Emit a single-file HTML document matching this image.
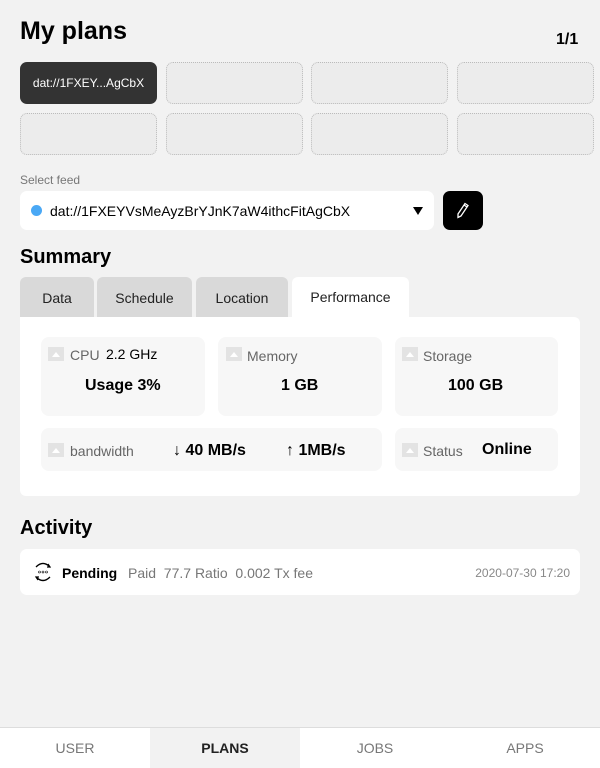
<!DOCTYPE html>
<html><head><style>
*{box-sizing:border-box;margin:0;padding:0}
body{width:600px;height:768px;background:#f2f2f2;font-family:"Liberation Sans",sans-serif;position:relative;overflow:hidden;color:#000}
.abs{position:absolute}
.cell{position:absolute;width:137px;height:42px;border:1px dotted #bbb;border-radius:7px;background:#ececec}
.tab{position:absolute;top:277px;height:40px;background:#d9d9d9;border-radius:6px 6px 0 0;font-size:14px;text-align:center;line-height:42px;color:#222}
.card{position:absolute;background:#f7f7f7;border-radius:8px}
.ic{position:absolute;width:16px;height:14px;background:#e3e3e3}
.ic:after{content:"";position:absolute;left:4px;top:5px;border-left:4px solid transparent;border-right:4px solid transparent;border-bottom:5px solid #fff}
.lbl{position:absolute;font-size:14px;color:#666}
.val{position:absolute;font-size:16px;font-weight:bold}
.nav{position:absolute;top:728px;width:150px;height:40px;text-align:center;line-height:40px;font-size:14px;color:#777}
</style></head><body>
<div class="abs" style="left:20px;top:17px;font-size:25px;font-weight:bold">My plans</div>
<div class="abs" style="left:556px;top:31px;font-size:16px;font-weight:bold">1/1</div>
<div class="cell" style="left:20px;top:62px;background:#333;border:none;color:#fff;font-size:12px;text-align:center;line-height:42px">dat://1FXEY...AgCbX</div>
<div class="cell" style="left:166px;top:62px"></div>
<div class="cell" style="left:311px;top:62px"></div>
<div class="cell" style="left:457px;top:62px"></div>
<div class="cell" style="left:20px;top:113px"></div>
<div class="cell" style="left:166px;top:113px"></div>
<div class="cell" style="left:311px;top:113px"></div>
<div class="cell" style="left:457px;top:113px"></div>
<div class="abs" style="left:20px;top:173px;font-size:12px;color:#777">Select feed</div>
<div class="abs" style="left:20px;top:191px;width:414px;height:39px;background:#fff;border-radius:7px">
 <div class="abs" style="left:11px;top:14px;width:11px;height:11px;border-radius:50%;background:#4aa8f5"></div>
 <div class="abs" style="left:30px;top:12px;font-size:14px">dat://1FXEYVsMeAyzBrYJnK7aW4ithcFitAgCbX</div>
 <div class="abs" style="left:393px;top:16px;border-left:5px solid transparent;border-right:5px solid transparent;border-top:8px solid #000"></div>
</div>
<div class="abs" style="left:443px;top:191px;width:40px;height:39px;background:#000;border-radius:7px">
 <svg class="abs" style="left:13px;top:11px" width="14" height="17" viewBox="0 0 14 17"><path d="M9 1.5l3 2L5 14l-3 1.5 0-3.5z M8 3l3 2" fill="none" stroke="#fff" stroke-width="1.3"/></svg>
</div>
<div class="abs" style="left:20px;top:246px;font-size:20px;font-weight:bold">Summary</div>
<div class="tab" style="left:20px;width:74px">Data</div>
<div class="tab" style="left:97px;width:95px">Schedule</div>
<div class="tab" style="left:196px;width:92px">Location</div>
<div class="tab" style="left:292px;width:117px;background:#fff;line-height:40px">Performance</div>
<div class="abs" style="left:20px;top:317px;width:560px;height:179px;background:#fff;border-radius:0 6px 6px 6px"></div>
<div class="card" style="left:41px;top:337px;width:164px;height:79px"></div>
<div class="card" style="left:218px;top:337px;width:164px;height:79px"></div>
<div class="card" style="left:395px;top:337px;width:163px;height:79px"></div>
<div class="card" style="left:41px;top:428px;width:341px;height:43px"></div>
<div class="card" style="left:395px;top:428px;width:163px;height:43px"></div>
<div class="ic" style="left:48px;top:347px"></div><div class="lbl" style="left:70px;top:347px">CPU</div><div class="abs" style="left:106px;top:346px;font-size:14px">2.2 GHz</div>
<div class="val" style="left:85px;top:377px">Usage 3%</div>
<div class="ic" style="left:226px;top:347px"></div><div class="lbl" style="left:247px;top:348px">Memory</div>
<div class="val" style="left:281px;top:377px">1 GB</div>
<div class="ic" style="left:402px;top:347px"></div><div class="lbl" style="left:423px;top:348px">Storage</div>
<div class="val" style="left:448px;top:377px">100 GB</div>
<div class="ic" style="left:48px;top:443px"></div><div class="lbl" style="left:70px;top:443px">bandwidth</div>
<div class="val" style="left:173px;top:442px">↓ 40 MB/s</div>
<div class="val" style="left:286px;top:442px">↑ 1MB/s</div>
<div class="ic" style="left:402px;top:443px"></div><div class="lbl" style="left:423px;top:443px">Status</div>
<div class="val" style="left:482px;top:441px">Online</div>
<div class="abs" style="left:20px;top:517px;font-size:20px;font-weight:bold">Activity</div>
<div class="abs" style="left:20px;top:549px;width:560px;height:46px;background:#fff;border-radius:7px">
 <svg class="abs" style="left:14px;top:12px" width="18" height="22" viewBox="0 0 18 22"><path d="M2 6Q9 -1 16 6M16 16Q9 23 2 16" fill="none" stroke="#000" stroke-width="1.3"/><path d="M14 3l2 3-3 0M4 19l-2-3 3 0" fill="none" stroke="#000" stroke-width="1.2"/><circle cx="5.5" cy="11" r="1" fill="none" stroke="#000" stroke-width=".6"/><circle cx="9" cy="11" r="1" fill="none" stroke="#000" stroke-width=".6"/><circle cx="12.5" cy="11" r="1" fill="none" stroke="#000" stroke-width=".6"/></svg>
 <div class="abs" style="left:42px;top:16px;font-size:14px;font-weight:bold">Pending</div>
 <div class="abs" style="left:108px;top:16px;font-size:14px;color:#777">Paid&nbsp; 77.7 Ratio&nbsp; 0.002 Tx fee</div>
 <div class="abs" style="right:10px;top:17px;font-size:12px;color:#888">2020-07-30 17:20</div>
</div>
<div class="abs" style="left:0;top:727px;width:600px;height:41px;background:#fff;border-top:1px solid #ddd"></div>
<div class="nav" style="left:0">USER</div>
<div class="nav" style="left:150px;background:#f2f2f2;color:#222;font-weight:bold">PLANS</div>
<div class="nav" style="left:300px">JOBS</div>
<div class="nav" style="left:450px">APPS</div>
</body></html>
